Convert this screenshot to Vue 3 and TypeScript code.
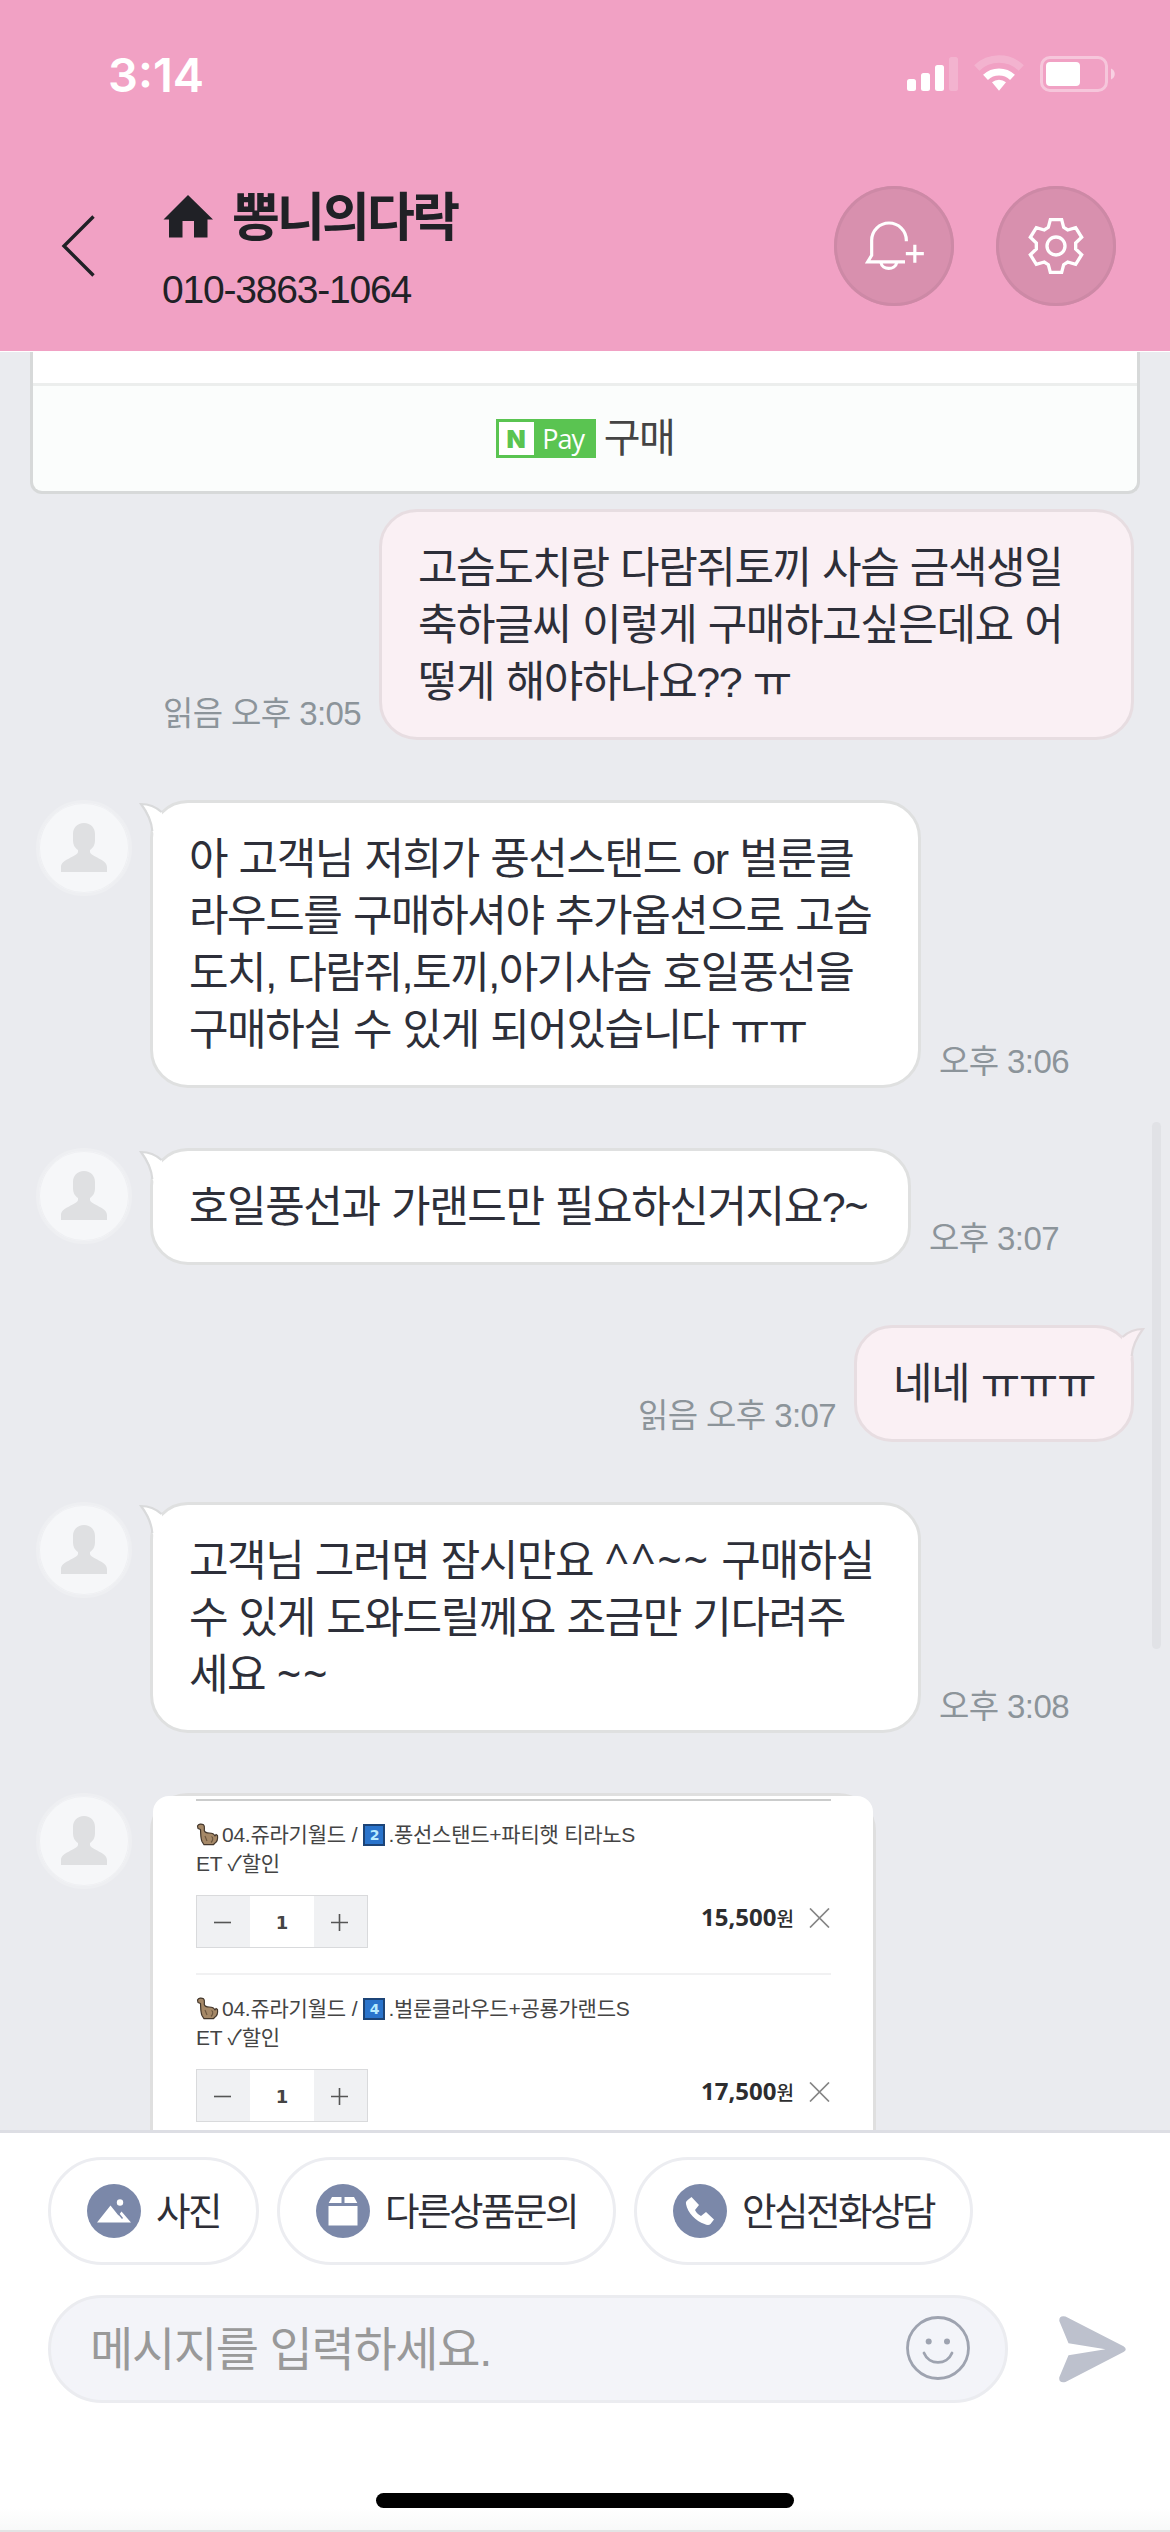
<script setup lang="ts">
interface TextMessage {
  id: number
  mine: boolean
  tail: boolean
  lines: string[]
  time: string
  width: number
}

interface OrderItem {
  id: number
  badge: string
  name: string
  price: string
}

interface Segment {
  text: string
  symbol: boolean
}

// Separates runs of ^ and ~ so they can be set in a wider face.
const segments = (line: string): Segment[] =>
  line
    .split(/([\^~]+)/)
    .filter((part) => part.length > 0)
    .map((part) => ({ text: part, symbol: /^[\^~]/.test(part) }))

const messages: TextMessage[] = [
  {
    id: 1,
    mine: true,
    tail: false,
    lines: ['고슴도치랑 다람쥐토끼 사슴 금색생일', '축하글씨 이렇게 구매하고싶은데요 어', '떻게 해야하나요?? ㅠ'],
    time: '읽음 오후 3:05',
    width: 755,
  },
  {
    id: 2,
    mine: false,
    tail: true,
    lines: ['아 고객님 저희가 풍선스탠드 or 벌룬클', '라우드를 구매하셔야 추가옵션으로 고슴', '도치, 다람쥐,토끼,아기사슴 호일풍선을', '구매하실 수 있게 되어있습니다 ㅠㅠ'],
    time: '오후 3:06',
    width: 771,
  },
  { id: 3, mine: false, tail: true, lines: ['호일풍선과 가랜드만 필요하신거지요?~'], time: '오후 3:07', width: 761 },
  { id: 4, mine: true, tail: true, lines: ['네네 ㅠㅠㅠ'], time: '읽음 오후 3:07', width: 280 },
  {
    id: 5,
    mine: false,
    tail: true,
    lines: ['고객님 그러면 잠시만요 ^^~~ 구매하실', '수 있게 도와드릴께요 조금만 기다려주', '세요 ~~'],
    time: '오후 3:08',
    width: 771,
  },
]

const items: OrderItem[] = [
  { id: 1, badge: '2', name: '.풍선스탠드+파티햇 티라노S', price: '15,500' },
  { id: 2, badge: '4', name: '.벌룬클라우드+공룡가랜드S', price: '17,500' },
]
</script>

<template>
  <div class="screen">
    <header class="header">
      <div class="status">
        <span class="clock">3:14</span>
        <svg class="status-icons" width="210" height="40" viewBox="0 0 210 40">
          <g fill="#fff">
            <rect x="2" y="21" width="9" height="12" rx="2.5" transform="translate(0 3)" />
            <rect x="16" y="18" width="9" height="18" rx="2.5" />
            <rect x="30" y="10" width="9" height="26" rx="2.5" />
            <rect x="44" y="2" width="9" height="34" rx="2.5" opacity=".2" />
            <path d="M87 27.300a11 11 0 0 1 14 0l-7 8.500z" />
          </g>
          <g fill="none" stroke="#fff">
            <path d="M71.800 13a32 32 0 0 1 44.400 0" stroke-width="7.500" opacity=".2" />
            <path d="M80.500 22.400a19.500 19.500 0 0 1 27 0" stroke-width="7" />
            <rect x="136.500" y="2.500" width="65" height="33" rx="8.500" stroke-width="3" opacity=".4" />
          </g>
          <rect x="141" y="7" width="34" height="24" rx="4" fill="#fff" />
          <path d="M206 13.500c5 2 5 9 0 11z" fill="#fff" opacity=".5" />
        </svg>
      </div>
      <div class="nav">
        <svg class="back" width="34" height="64" viewBox="0 0 34 64">
          <path d="M32.500 2.500L3 32l29.500 29.500" fill="none" stroke="#202126" stroke-width="3.400" />
        </svg>
        <div class="shop">
          <div class="shop-name">
            <svg width="50" height="43" viewBox="0 0 50 43">
              <path d="M25 0l25 24.500h-5.500V42.500H31V26H19.500v16.500H6V24.500H.5z" fill="#202126" />
            </svg>
            <span>뽕니의다락</span>
          </div>
          <div class="phone">010-3863-1064</div>
        </div>
        <div class="round">
          <svg width="120" height="120" viewBox="0 0 360 360" fill="none" stroke="#fff" stroke-width="9.500">
            <path d="M217 166v-3a52 52 0 0 0-104 0v45L101 227.500h112" />
            <path d="M141 230c3 23 43 23 47 0M215.500 203h54M242.500 176v54" />
          </svg>
        </div>
        <div class="round">
          <svg width="120" height="120" viewBox="-180 -180 360 360" fill="none" stroke="#fff" stroke-width="10">
            <path d="M-17-79H17L23-56 35-48 59-55 77-26 59-9V9L77 26 59 55 35 48 23 56 17 79H-17L-23 56-35 48-59 55-77 26-59 9V-9L-77-26-59-55-35-48-23-56z" />
            <circle r="27" />
          </svg>
        </div>
      </div>
    </header>

    <main class="chat">
      <section class="product">
        <div class="product-info"></div>
        <div class="buy">
          <span class="npay"><b>N</b><i>Pay</i></span>
          <span class="buy-label">구매</span>
        </div>
      </section>

      <div v-for="m in messages" :key="m.id" class="row" :class="{ mine: m.mine }">
        <div v-if="!m.mine" class="avatar">
          <svg width="46" height="49" viewBox="0 0 46 49">
            <path d="M23 0c-7 0-11 5-11 11v6c0 5 2 8 5 10v2c-1 5-17 7-17 15v5h46v-5c0-8-16-10-17-15v-2c3-2 5-5 5-10v-6c0-6-4-11-11-11z" fill="#dfe0e2" />
          </svg>
        </div>
        <div class="bubble" :style="{ width: m.width + 'px' }">
          <svg v-if="m.tail" class="tail" width="26" height="34" viewBox="0 0 26 34">
            <path class="tail-fill" d="M3 4C11 5 18 8 22.500 12L25 18 15 34 13.500 31C13 20 9 12 3 4z" />
            <path class="tail-line" d="M22.500 12C17 7 10 4 2 4 8 12 12.500 20 13.300 31" />
          </svg>
          <div v-for="line in m.lines" :key="line" class="line"><span v-for="(s, i) in segments(line)" :key="i" :class="{ symbol: s.symbol }">{{ s.text }}</span></div>
        </div>
        <div class="time">{{ m.time }}</div>
      </div>

      <div class="row">
        <div class="avatar">
          <svg width="46" height="49" viewBox="0 0 46 49">
            <path d="M23 0c-7 0-11 5-11 11v6c0 5 2 8 5 10v2c-1 5-17 7-17 15v5h46v-5c0-8-16-10-17-15v-2c3-2 5-5 5-10v-6c0-6-4-11-11-11z" fill="#dfe0e2" />
          </svg>
        </div>
        <div class="photo">
          <div class="order">
            <div v-for="item in items" :key="item.id" class="item">
              <div class="item-name">
                <svg class="dino" width="23" height="23" viewBox="0 0 23 23">
                  <path d="M1.500 3C2.500.8 5.500.6 7.500 1.800 9 3 8.300 5 8.300 7.500c.5 2 2.500 2.500 5 2.500 3.500 0 4.700.7 5.700 3l1-1.500 1.500 1c.5 3.500.2 6-3 8l-1 1.200H8L6 18.500C4.500 15 4.800 11 4.500 6.500L2 5.500z" fill="#a58867" stroke="#43372c" stroke-width="1.200" stroke-linejoin="round" />
                  <path d="M9 13l2 5M15.500 13.500c2 1 1.500 4-.5 6" fill="none" stroke="#6b563f" stroke-width="1.100" />
                </svg>
                <span class="world">04.쥬라기월드</span>
                <span class="slash">/</span>
                <span class="key">{{ item.badge }}</span>
                <span>{{ item.name }}</span>
              </div>
              <div class="item-name">ET ✓할인</div>
              <div class="controls">
                <div class="stepper">
                  <svg width="53" height="50" viewBox="0 0 53 50"><path d="M17 26.500h17" stroke="#555" stroke-width="1.600" /></svg>
                  <span>1</span>
                  <svg width="53" height="50" viewBox="0 0 53 50"><path d="M17 26.500h17M25.500 18v17" stroke="#555" stroke-width="1.600" /></svg>
                </div>
                <div class="price">{{ item.price }}<small>원</small></div>
                <svg width="21" height="20" viewBox="0 0 21 20"><path d="M1 .5l19 19M20 .5l-19 19" stroke="#858585" stroke-width="1.700" /></svg>
              </div>
            </div>
          </div>
        </div>
      </div>
      <div class="scrollbar"></div>
    </main>

    <footer class="footer">
      <div class="chips">
        <div class="chip">
          <svg width="54" height="54" viewBox="0 0 54 54">
            <circle cx="27" cy="27" r="27" fill="#7b88a9" />
            <path d="M10 38.500L23.500 21.500l8 10 3-4L44 38.500z" fill="#fff" />
            <path d="M31 29l4.500 5.500" stroke="#7b88a9" stroke-width="1.500" />
            <circle cx="33" cy="18.500" r="3.200" fill="#fff" />
          </svg>
          <span>사진</span>
        </div>
        <div class="chip">
          <svg width="54" height="54" viewBox="0 0 54 54">
            <circle cx="27" cy="27" r="27" fill="#7b88a9" />
            <path d="M16 13h9.500v6H12.700zM28.500 13H38l3.300 6H28.500zM12.500 22h29v19.500h-29z" fill="#fff" />
          </svg>
          <span>다른상품문의</span>
        </div>
        <div class="chip">
          <svg width="54" height="54" viewBox="0 0 54 54">
            <circle cx="27" cy="27" r="27" fill="#7b88a9" />
            <path d="M18.500 13l7.500 8-4 5c1.500 3 3 4.500 6 6l5-4 8 7.500-3.500 4.500c-1.500 1.500-4 1-6 0C23 37 14.500 29 13 20c-.3-2 .5-3 2-4.200z" fill="#fff" />
          </svg>
          <span>안심전화상담</span>
        </div>
      </div>
      <div class="composer">
        <div class="input">
          <span>메시지를 입력하세요.</span>
          <svg width="64" height="64" viewBox="0 0 64 64">
            <circle cx="32" cy="32" r="30.500" fill="none" stroke="#9ea3b0" stroke-width="2.800" />
            <circle cx="22.700" cy="25.500" r="3" fill="#9ea3b0" />
            <circle cx="41" cy="25.500" r="3" fill="#9ea3b0" />
            <path d="M18 37c5 12.500 23 12.500 28 0" fill="none" stroke="#9ea3b0" stroke-width="2.800" stroke-linecap="round" />
          </svg>
        </div>
        <svg class="send" width="67" height="67" viewBox="0 0 67 67">
          <path d="M6.500.6L64.500 30.300q4.500 2.900 0 5.800L6.500 66Q-.5 67.500.3 61.300L9.500 39.300 46.500 33.300 9.500 27.200.3 5Q0-.8 6.500.6z" fill="#bdc1cd" />
        </svg>
      </div>
      <div class="home-bar"></div>
      <div class="edge"></div>
    </footer>
  </div>
</template>

<style>
body {
  margin: 0;
}
</style>

<style scoped>
* {
  box-sizing: border-box;
}
svg {
  display: block;
  flex: none;
}
.screen {
  width: 1170px;
  height: 2532px;
  display: flex;
  flex-direction: column;
  overflow: hidden;
  background: #fff;
  font-family: "Liberation Sans", "Noto Sans CJK KR", sans-serif;
  color: #2d2f39;
  white-space: nowrap;
}
.header {
  height: 351px;
  flex: none;
  background: #f1a1c4;
}
.status {
  height: 150px;
  padding: 0 55px 0 108px;
  display: flex;
  justify-content: space-between;
  align-items: center;
}
.clock {
  font: 600 47px/60px Inter, sans-serif;
  color: #fff;
  letter-spacing: 0;
}
.nav {
  display: flex;
  align-items: center;
  height: 192px;
  padding: 0 54px 0 61px;
}
.shop {
  flex: 1;
  padding: 8px 0 0 68px;
  color: #202126;
}
.shop-name {
  display: flex;
  align-items: center;
  gap: 19px;
  height: 62px;
  font-size: 52px;
  line-height: 62px;
  font-weight: 700;
  letter-spacing: -2.800px;
}
.shop-name svg {
  margin-bottom: 3px;
}
.phone {
  margin: 17px 0 0 -1px;
  font-size: 39px;
  line-height: 48px;
  letter-spacing: -1.200px;
}
.round {
  width: 120px;
  height: 120px;
  margin-left: 42px;
  border-radius: 50%;
  background: #d890ae;
  box-shadow: inset 0 0 0 3px #cd89a6;
}
.chat {
  height: 1779px;
  flex: none;
  position: relative;
  overflow: hidden;
  background: #eaebef;
  border-top: 1px solid #fff;
}
.product {
  width: 1110px;
  height: 142px;
  margin: 0 auto 15px 30px;
  border: 3px solid #d7d9d9;
  border-top: 0;
  border-radius: 0 0 12px 12px;
  background: #fbfdfc;
  overflow: hidden;
}
.product-info {
  height: 34px;
  background: #fff;
  border-bottom: 3px solid #eceeed;
}
.buy {
  height: 105px;
  display: flex;
  align-items: center;
  justify-content: center;
  gap: 8px;
  font-size: 40px;
  letter-spacing: -1.500px;
  color: #444;
}
.buy-label {
  padding-bottom: 7px;
}
.npay {
  display: flex;
  width: 100px;
  height: 39px;
  padding: 3px;
  background: #5ac451;
  color: #fff;
}
.npay b {
  width: 35px;
  background: #fff;
  color: #5ac451;
  font: 900 25px/34px Inter, sans-serif;
  text-align: center;
  letter-spacing: 0;
}
.npay i {
  flex: 1;
  font: normal 400 27px/33px "Open Sans", sans-serif;
  text-align: center;
  letter-spacing: -1px;
}
.row {
  display: flex;
  align-items: flex-end;
  gap: 18px;
  margin: 0 36px 60px;
}
.row.mine {
  flex-direction: row-reverse;
}
.avatar {
  width: 96px;
  height: 96px;
  flex: none;
  align-self: flex-start;
  padding: 20px 22px;
  border-radius: 50%;
  background: #f6f7f9;
  border: 3px solid #eeeff2;
  box-shadow: inset 0 0 0 1px #eff0f3;
}
.bubble {
  position: relative;
  flex: none;
  padding: 28px 36px 26px;
  border: 3px solid #dfe0e0;
  border-radius: 38px;
  background: #fff;
}
.mine .bubble {
  background: #faf0f4;
  border-color: #e7dde1;
}
.line {
  height: 57px;
  font-size: 43px;
  line-height: 57px;
  letter-spacing: -1.450px;
  word-spacing: 1px;
}
.symbol {
  font-family: "Noto Sans", sans-serif;
  line-height: 1;
  letter-spacing: 1.700px;
}
.tail {
  position: absolute;
  left: -14px;
  top: -3px;
}
.mine .tail {
  left: auto;
  right: -14px;
  transform: scaleX(-1);
}
.tail-fill {
  fill: #fff;
}
.tail-line {
  fill: none;
  stroke: #d9dadb;
  stroke-width: 2.200;
}
.mine .tail-fill {
  fill: #faf0f4;
}
.mine .tail-line {
  stroke: #e0d9dc;
}
.time {
  height: 50px;
  font-size: 33px;
  line-height: 48px;
  letter-spacing: -0.600px;
  color: #8c949a;
}
.photo {
  width: 726px;
  height: 500px;
  border: 3px solid #dfdfdf;
  border-radius: 38px;
  background: #dfdfdf;
}
.order {
  height: 494px;
  padding: 3px 42px 0 43px;
  border-radius: 16px;
  background: #fff;
  color: #444;
}
.item {
  height: 174px;
  padding-top: 19px;
  border-top: 2px solid #f1f1f2;
}
.item:first-child {
  border-color: #cbcccc;
}
.item-name {
  display: flex;
  align-items: center;
  height: 29px;
  font-size: 21px;
  line-height: 29px;
  letter-spacing: -0.250px;
}
.world {
  margin-left: 3px;
}
.slash {
  margin: 0 5px 0 6px;
}
.key {
  width: 22px;
  height: 22px;
  margin: 0 3px 0 1px;
  border: 2px solid #1c4477;
  background: #2a74cc;
  color: #b9ecff;
  font: 700 14px/18px "DejaVu Sans", sans-serif;
  text-align: center;
}
.controls {
  display: flex;
  align-items: center;
  margin-top: 17px;
  height: 53px;
}
.stepper {
  display: flex;
  width: 172px;
  height: 53px;
  border: 1.500px solid #d9dadc;
  background: #f0f1f3;
}
.stepper span {
  flex: 1;
  background: #fff;
  text-align: center;
  font: 700 18px/54px "DejaVu Sans", sans-serif;
}
.price {
  margin: -9px 15px 0 auto;
  font: 700 24px/30px "Noto Sans", sans-serif;
  letter-spacing: 0;
  color: #2d2d2f;
}
.price small {
  font: 500 19px "Noto Sans CJK KR", sans-serif;
}
.controls > svg {
  margin-top: -7px;
  margin-right: 1px;
}
.scrollbar {
  position: absolute;
  right: 9px;
  top: 770px;
  width: 9px;
  height: 527px;
  border-radius: 5px;
  background: #e1e2e6;
}
.footer {
  height: 402px;
  flex: none;
  border-top: 3px solid #dddee4;
  padding-top: 24px;
}
.chips {
  display: flex;
  gap: 18px;
  padding-left: 48px;
}
.chip {
  display: flex;
  align-items: center;
  gap: 15px;
  height: 108px;
  padding: 0 36px;
  border: 3px solid #ecedf1;
  border-radius: 54px;
  font-size: 37.500px;
  letter-spacing: -2.500px;
  color: #2e2e36;
}
.chip span {
  padding-bottom: 5px;
}
.composer {
  display: flex;
  align-items: center;
  margin: 30px 44px 0 48px;
  justify-content: space-between;
}
.input {
  width: 960px;
  height: 108px;
  padding: 0 35px 2px 39px;
  display: flex;
  align-items: center;
  justify-content: space-between;
  border: 3px solid #ebecf0;
  border-radius: 54px;
  background: #f3f4f9;
  color: #999;
  font-size: 47px;
  letter-spacing: -1.300px;
}
.input span {
  padding-bottom: 5px;
}
.home-bar {
  width: 418px;
  height: 15px;
  margin: 90px auto 0;
  border-radius: 8px;
  background: #000;
}
.edge {
  height: 24px;
  background: linear-gradient(#fff, #f8f9f9);
  border-bottom: 2px solid #e3e4e4;
}
</style>
